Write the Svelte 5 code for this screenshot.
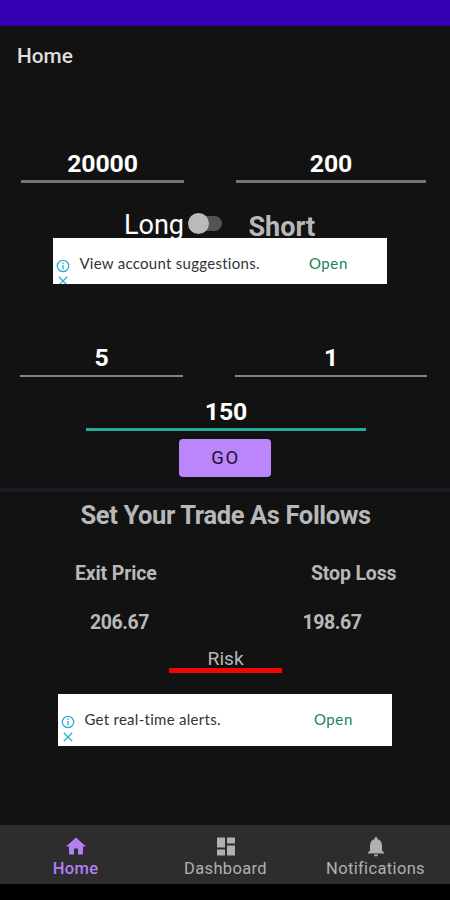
<script lang="ts">
let capital = $state("20000");
let entry = $state("200");
let reward = $state("5");
let risk = $state("1");
let riskAmount = $state("150");
let short = $state(false);
let active = $state("Home");

const tabs = [
	{ label: "Home", icon: "M10 20v-6h4v6h5v-8h3L12 3 2 12h3v8z" },
	{
		label: "Dashboard",
		icon: "M3 13h8V3H3v10zm0 8h8v-6H3v6zm10 0h8V11h-8v10zm0-18v6h8V3h-8z",
	},
	{
		label: "Notifications",
		icon: "M12 22c1.1 0 2-.9 2-2h-4c0 1.1.89 2 2 2zm6-6v-5c0-3.07-1.64-5.64-4.5-6.32V4c0-.83-.67-1.5-1.5-1.5s-1.5.67-1.5 1.5v.68C7.63 5.36 6 7.92 6 11v5l-2 2v1h16v-1l-2-2z",
	},
];
</script>

{#snippet ad(text: string, kind: string)}
	<aside class="ad {kind}">
		<div class="choices">
			<svg class="info" viewBox="0 0 14 14">
				<circle cx="7" cy="7" r="5.7" />
				<path d="M7 6v4.5M7 3.4v1.5" />
			</svg>
			<svg class="close" viewBox="0 0 10 10">
				<path d="M.8.8l8.4 8.4M9.2.8L.8 9.2" />
			</svg>
		</div>
		<span class="ad-text">{text}</span>
		<span class="ad-open">Open</span>
	</aside>
{/snippet}

<div class="screen">
	<div class="status"></div>
	<header>Home</header>

	<main>
		<div class="fields first">
			<input bind:value={capital} aria-label="Capital" />
			<input bind:value={entry} aria-label="Entry" />
		</div>

		<div class="direction">
			<span class="long">Long</span>
			<button class="switch" class:on={short} aria-label="Direction" onclick={() => (short = !short)}>
				<span class="thumb"></span>
			</button>
			<span class="short">Short</span>
		</div>

		{@render ad("View account suggestions.", "clipped")}

		<div class="fields second">
			<input bind:value={reward} aria-label="Reward" />
			<input bind:value={risk} aria-label="Risk" />
		</div>
		<input class="focused" bind:value={riskAmount} aria-label="Risk amount" />
		<button class="go">GO</button>

		<hr />

		<h2>Set Your Trade As Follows</h2>
		<div class="results labels">
			<span>Exit Price</span>
			<span>Stop Loss</span>
		</div>
		<div class="results values">
			<span>206.67</span>
			<span>198.67</span>
		</div>
		<div class="risk">Risk</div>

		{@render ad("Get real-time alerts.", "full")}
	</main>

	<nav>
		{#each tabs as tab}
			<button class="tab" class:active={active === tab.label} onclick={() => (active = tab.label)}>
				<svg viewBox="0 0 24 24"><path d={tab.icon} /></svg>
				<span>{tab.label}</span>
			</button>
		{/each}
	</nav>
	<div class="system"></div>
</div>

<style>
	:global(body) {
		margin: 0;
		background: #000;
	}

	.screen {
		display: flex;
		flex-direction: column;
		width: 450px;
		height: 900px;
		overflow: hidden;
		background: #121212;
		color: #b8b8b8;
		font-family: Roboto, sans-serif;
	}

	.status {
		height: 26px;
		background: #3700b3;
	}

	header {
		height: 60px;
		padding-left: 17px;
		font-size: 20.8px;
		font-weight: 500;
		line-height: 60px;
		color: #dedede;
	}

	main {
		display: flex;
		flex-direction: column;
		flex: 1;
	}

	button {
		padding: 0;
		border: 0;
		font-family: inherit;
	}

	input {
		box-sizing: border-box;
		width: 100%;
		height: 35px;
		padding: 0 0 2px;
		border: 0;
		border-bottom: 3px solid #747474;
		border-radius: 0;
		outline: 0;
		background: none;
		color: #fff;
		font-family: inherit;
		font-size: 24.8px;
		font-weight: 700;
		letter-spacing: -0.1px;
		text-align: center;
	}

	.fields {
		display: grid;
		justify-content: start;
	}

	.first {
		grid-template-columns: 163px 190px;
		gap: 52px;
		margin: 62px 0 0 21px;
	}

	.second {
		grid-template-columns: 163px 192px;
		gap: 52px;
		margin: 59px 0 0 20px;
	}

	.second input {
		height: 34px;
		border-bottom: 2px solid #858585;
	}

	.focused {
		width: 280px;
		margin: 19.5px 0 0 86px;
		border-color: #23ab98;
	}

	.direction {
		display: flex;
		height: 55px;
		padding-left: 124px;
		font-size: 27px;
	}

	.long {
		width: 64px;
		line-height: 84px;
		color: #fff;
	}

	.switch {
		display: flex;
		align-items: center;
		width: 34px;
		height: 15px;
		margin-top: 33px;
		border-radius: 8px;
		background: #545454;
	}

	.thumb {
		width: 21px;
		height: 21px;
		border-radius: 50%;
		background: #bababa;
	}

	.on {
		justify-content: flex-end;
	}

	.short {
		margin-left: 26.5px;
		font-weight: 700;
		line-height: 89px;
	}

	.ad {
		display: grid;
		grid-template-columns: 26px 229.5px 1fr;
		width: 334px;
		background: #fff;
		overflow: hidden;
		font-family: Lato, sans-serif;
		font-size: 15px;
		line-height: 51px;
		color: #333;
	}

	.clipped {
		height: 45.5px;
		margin-left: 53.4px;
	}

	.full {
		height: 52px;
		margin: 21px 0 0 58.4px;
	}

	.choices {
		display: flex;
		flex-direction: column;
		align-items: center;
		gap: 3px;
		width: 19px;
		padding-top: 21px;
	}

	.choices svg {
		fill: none;
		stroke: #2caed3;
		stroke-width: 1.3;
	}

	.info {
		width: 14px;
		height: 14px;
	}

	.close {
		width: 10px;
		height: 10px;
	}

	.ad-text {
		letter-spacing: 0.28px;
		white-space: nowrap;
	}

	.ad-open {
		color: #148456;
		letter-spacing: 0.6px;
	}

	.go {
		width: 92px;
		height: 38px;
		margin: 8px 0 0 179px;
		padding-left: 1px;
		border-radius: 4px;
		background: #bb86fc;
		color: #1c1426;
		font-size: 18.5px;
		font-weight: 400;
		letter-spacing: 1.5px;
	}

	hr {
		width: 100%;
		height: 4px;
		margin: 10.5px 0 0;
		border: 0;
		background: #1b1a25;
	}

	h2 {
		margin: 0 0 0 80.5px;
		font-size: 25.5px;
		font-weight: 700;
		line-height: 46px;
		letter-spacing: -0.37px;
	}

	.results {
		display: grid;
		font-size: 19.5px;
		font-weight: 700;
		letter-spacing: -0.15px;
	}

	.labels {
		grid-template-columns: 236px 1fr;
		margin-top: 21.5px;
		padding-left: 75px;
		line-height: 30px;
	}

	.values {
		grid-template-columns: 212.5px 1fr;
		margin-top: 19px;
		padding-left: 90px;
		line-height: 30px;
		letter-spacing: -0.45px;
	}

	.risk {
		width: 112.5px;
		height: 18px;
		margin: 12px 0 0 169.4px;
		border-bottom: 5px solid #f20500;
		font-size: 19.2px;
		line-height: 18px;
		text-align: center;
	}

	nav {
		display: grid;
		grid-template-columns: repeat(3, 1fr);
		height: 59px;
		background: #2d2d2d;
	}

	.tab {
		display: flex;
		flex-direction: column;
		align-items: center;
		padding: 9px 0 0 1px;
		background: none;
		color: #b0b0b0;
		font-size: 16.5px;
		font-weight: 400;
		line-height: 20px;
		letter-spacing: 0.35px;
	}

	.tab svg {
		width: 24px;
		height: 25px;
		fill: currentColor;
	}

	.active {
		color: #b47ff5;
		font-weight: 500;
	}

	.system {
		height: 16px;
		background: #000;
	}
</style>
